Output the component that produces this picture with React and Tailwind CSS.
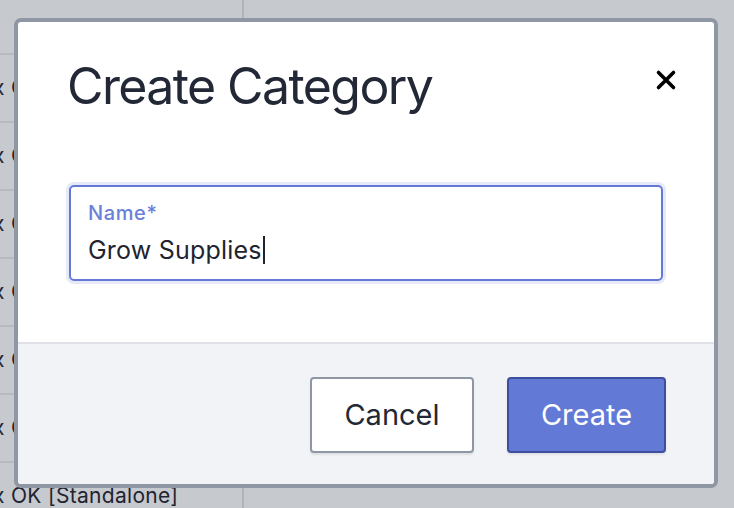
import React from "react";

const rows = ["x OK [Standalone]", "x OK [Standalone]", "x OK [Standalone]", "x OK [Standalone]", "x OK [Standalone]", "x OK [Standalone]", "x OK [Standalone]"];

const App = () => {
  return (
    <div className="relative w-[734px] h-[508px] overflow-hidden bg-[#c6c9ce] font-['Inter',sans-serif]">
      {/* table behind the dialog */}
      <div className="flex h-full">
        <div className="w-[242px] flex flex-col overflow-hidden">
          <div className="h-[53px] shrink-0" />
          {rows.map((r, i) => (
            <div
              key={i}
              className="h-[68px] shrink-0 border-t-2 border-[#b7bbc1] flex items-center overflow-hidden"
            >
              <span className="ml-[-7px] whitespace-nowrap text-[21px] tracking-[0.3px] text-[#1f2430]">{r}</span>
            </div>
          ))}
        </div>
        <div className="w-[2px] bg-[#b0b4bb]" />
        <div className="flex-1" />
      </div>

      {/* Modal */}
      <div className="absolute left-[14px] top-[18px] w-[704px] h-[470px] border-4 border-[#8f97a4] rounded-[7px] bg-white flex flex-col overflow-hidden">
        <div className="flex-1 flex flex-col">
          <div className="flex items-start justify-between pl-[49px] pr-[37px] pt-[39px]">
            <h1 className="text-[50px] leading-[50px] text-[#222836] tracking-[-1.6px]">Create Category</h1>
            <button className="mt-[8px] w-[22px] h-[22px] flex items-center justify-center text-black">
              <svg width="22" height="22" viewBox="0 0 22 22">
                <path d="M3.5 3.5 L18.5 18.5 M18.5 3.5 L3.5 18.5" stroke="currentColor" strokeWidth="3.6" strokeLinecap="round" />
              </svg>
            </button>
          </div>
          <div className="px-[51px] pt-[74px]">
            <div className="h-[96px] rounded-[5px] border-2 border-[#6479d6] ring-[3px] ring-[#e6e9f8] px-[17px] pt-[14px]">
              <div className="text-[20px] leading-[24px] font-medium tracking-[0.6px] text-[#6b80d9]">Name*</div>
              <div className="mt-[9px] flex items-center text-[25px] leading-[32px] tracking-[0.2px] text-[#1f2430]">
                <span>Grow Supplies</span>
                <span className="w-[2px] h-[28px] bg-[#1f2430] ml-[1px]" />
              </div>
            </div>
          </div>
        </div>
        <div className="h-[142px] shrink-0 border-t-2 border-[#dfe1e6] bg-[#f2f3f7] flex items-center justify-end gap-[33px] pr-[48px] pt-[1px]">
          <button className="w-[164px] h-[76px] rounded-[4px] border-2 border-[#8f97a4] bg-white text-[29px] text-[#222836] shadow-[0_2px_2px_rgba(0,0,0,0.08)]">
            Cancel
          </button>
          <button className="w-[159px] h-[76px] rounded-[4px] border-2 border-[#3f4d9e] bg-[#6279d6] text-[29px] text-white shadow-[0_2px_2px_rgba(0,0,0,0.08)]">
            Create
          </button>
        </div>
      </div>
    </div>
  );
};

export default App;
